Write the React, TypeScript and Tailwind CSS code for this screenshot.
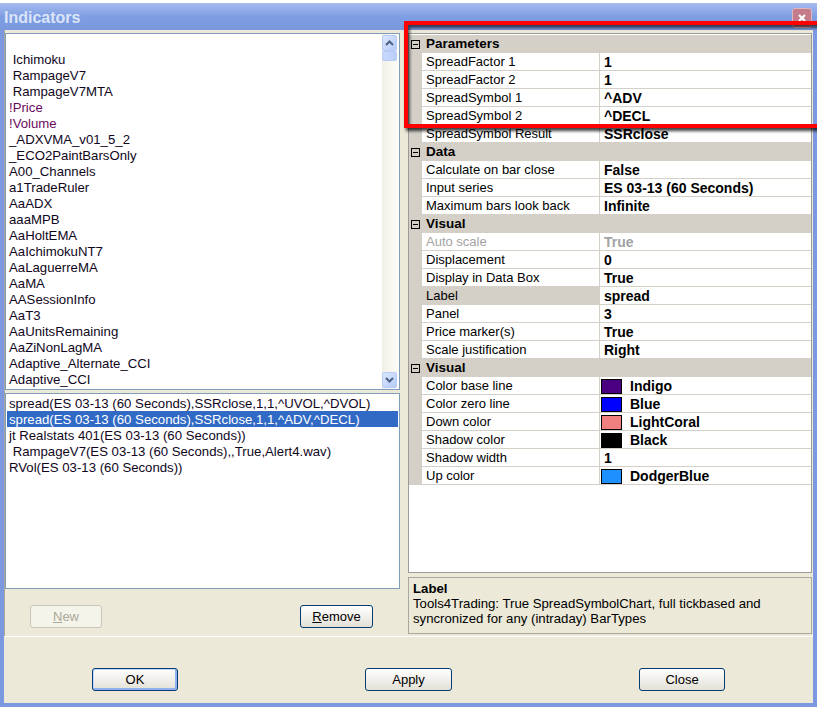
import React from "react";

const indicators: { t: string; c?: string }[] = [
  { t: " " },
  { t: " Ichimoku" },
  { t: " RampageV7" },
  { t: " RampageV7MTA" },
  { t: "!Price", c: "text-[#6a0a5e]" },
  { t: "!Volume", c: "text-[#6a0a5e]" },
  { t: "_ADXVMA_v01_5_2" },
  { t: "_ECO2PaintBarsOnly" },
  { t: "A00_Channels" },
  { t: "a1TradeRuler" },
  { t: "AaADX" },
  { t: "aaaMPB" },
  { t: "AaHoltEMA" },
  { t: "AaIchimokuNT7" },
  { t: "AaLaguerreMA" },
  { t: "AaMA" },
  { t: "AASessionInfo" },
  { t: "AaT3" },
  { t: "AaUnitsRemaining" },
  { t: "AaZiNonLagMA" },
  { t: "Adaptive_Alternate_CCI" },
  { t: "Adaptive_CCI" },
];

const configured = [
  "spread(ES 03-13 (60 Seconds),SSRclose,1,1,^UVOL,^DVOL)",
  "spread(ES 03-13 (60 Seconds),SSRclose,1,1,^ADV,^DECL)",
  "jt Realstats 401(ES 03-13 (60 Seconds))",
  " RampageV7(ES 03-13 (60 Seconds),,True,Alert4.wav)",
  "RVol(ES 03-13 (60 Seconds))",
];

type Row =
  | { kind: "cat"; name: string }
  | { kind: "item"; name: string; value: string; swatch?: string; disabled?: boolean; selected?: boolean };

const rows: Row[] = [
  { kind: "cat", name: "Parameters" },
  { kind: "item", name: "SpreadFactor 1", value: "1" },
  { kind: "item", name: "SpreadFactor 2", value: "1" },
  { kind: "item", name: "SpreadSymbol 1", value: "^ADV" },
  { kind: "item", name: "SpreadSymbol 2", value: "^DECL" },
  { kind: "item", name: "SpreadSymbol Result", value: "SSRclose" },
  { kind: "cat", name: "Data" },
  { kind: "item", name: "Calculate on bar close", value: "False" },
  { kind: "item", name: "Input series", value: "ES 03-13 (60 Seconds)" },
  { kind: "item", name: "Maximum bars look back", value: "Infinite" },
  { kind: "cat", name: "Visual" },
  { kind: "item", name: "Auto scale", value: "True", disabled: true },
  { kind: "item", name: "Displacement", value: "0" },
  { kind: "item", name: "Display in Data Box", value: "True" },
  { kind: "item", name: "Label", value: "spread", selected: true },
  { kind: "item", name: "Panel", value: "3" },
  { kind: "item", name: "Price marker(s)", value: "True" },
  { kind: "item", name: "Scale justification", value: "Right" },
  { kind: "cat", name: "Visual" },
  { kind: "item", name: "Color base line", value: "Indigo", swatch: "bg-[#4b0082]" },
  { kind: "item", name: "Color zero line", value: "Blue", swatch: "bg-[#0000ff]" },
  { kind: "item", name: "Down color", value: "LightCoral", swatch: "bg-[#f08080]" },
  { kind: "item", name: "Shadow color", value: "Black", swatch: "bg-[#000000]" },
  { kind: "item", name: "Shadow width", value: "1" },
  { kind: "item", name: "Up color", value: "DodgerBlue", swatch: "bg-[#1e90ff]" },
];

function Minus() {
  return (
    <div className="flex h-[9px] w-[9px] items-center justify-center border border-[#000000] bg-[#d4d0c8]">
      <div className="h-[1px] w-[5px] bg-black" />
    </div>
  );
}

function Arrow({ up }: { up?: boolean }) {
  return (
    <svg width="9" height="6" viewBox="0 0 9 6">
      <path
        d={up ? "M1 5 L4.5 1.5 L8 5" : "M1 1 L4.5 4.5 L8 1"}
        fill="none"
        stroke="#4d6185"
        strokeWidth="2"
      />
    </svg>
  );
}

function ScrollBtn({ up }: { up?: boolean }) {
  return (
    <div className="flex h-[16px] w-[15px] items-center justify-center rounded-[2px] border border-[#b7cbf7] bg-gradient-to-br from-[#dce7fd] to-[#b6cbf8]">
      <Arrow up={up} />
    </div>
  );
}

export default function App() {
  return (
    <div className="relative h-[707px] w-[817px] overflow-hidden bg-white font-['Liberation_Sans',Arial,sans-serif] text-[13px] text-black">
      <div className="h-[3px] bg-white" />
      <div className="flex h-[704px] flex-col bg-[#7c98e0] px-[4px] pb-[4px]">
        {/* title bar */}
        <div className="-mx-[4px] flex h-[27px] items-center justify-between bg-gradient-to-b from-[#a6bcef] via-[#7f9de2] to-[#7a98de] pl-[4px] pr-[5px]">
          <span className="pt-[3px] text-[16px] font-bold leading-none text-[#dbe5f8]">Indicators</span>
          <div className="mt-[2px] flex h-[20px] w-[20px] items-center justify-center rounded-[3px] border border-[#e2b8c0] bg-[#c47c8a]">
            <svg width="10" height="10" viewBox="0 0 10 10">
              <path d="M2 2 L8 8 M8 2 L2 8" stroke="white" strokeWidth="2.2" />
            </svg>
          </div>
        </div>

        {/* body */}
        <div className="flex flex-1 flex-col bg-[#ece9d8]">
          {/* main split area */}
          <div className="flex h-[607px] border-b border-white">
            {/* left panel */}
            <div className="flex w-[400px] flex-col border-l border-[#aca899] pt-[3px] text-[13.2px]">
              <div className="flex h-[357px] w-[395px] border border-[#7f9db9] bg-white">
                <div className="flex-1 pt-[2px] pl-[3px]">
                  {indicators.map((it, i) => (
                    <div key={i} className={`h-[16px] whitespace-pre leading-[16px] ${it.c ?? "text-[#10061c]"}`}>
                      {it.t}
                    </div>
                  ))}
                </div>
                <div className="flex w-[17px] flex-col items-start bg-gradient-to-r from-[#f1efe6] to-[#fdfdfa] pt-[1px]">
                  <ScrollBtn up />
                  <div className="h-[10px] w-[15px] rounded-[2px] border border-[#b7cbf7] bg-gradient-to-r from-[#cbdafd] to-[#b9cdf9]" />
                  <div className="flex-1" />
                  <div className="mb-[1px]">
                    <ScrollBtn />
                  </div>
                </div>
              </div>
              <div className="mt-[3px] h-[196px] w-[395px] border border-[#7f9db9] bg-white pt-[1px]">
                {configured.map((c, i) => (
                  <div
                    key={i}
                    className={`mx-[1px] h-[16px] whitespace-pre pl-[2px] leading-[17px] ${
                      i === 1 ? "bg-[#316ac5] text-white" : "text-[#10061c]"
                    }`}
                  >
                    {c}
                  </div>
                ))}
              </div>
              <div className="mt-[16px] flex text-[13px]">
                <div className="ml-[25px] flex h-[23px] w-[72px] items-center justify-center rounded-[3px] border border-[#c9c7ba] bg-[#f5f4ea] text-[#aca899]">
                  <span>
                    <span className="underline">N</span>ew
                  </span>
                </div>
                <div className="ml-[198px] flex h-[23px] w-[73px] items-center justify-center rounded-[3px] border border-[#003c74] bg-gradient-to-b from-white to-[#e3e0d6]">
                  <span>
                    <span className="underline">R</span>emove
                  </span>
                </div>
              </div>
            </div>

            {/* right panel */}
            <div className="flex flex-1 flex-col pl-[4px] pt-[3px]">
              <div className="h-[540px] w-[404px] border border-[#9a9a9a] bg-white pt-[1px]">
                {rows.map((r, i) =>
                  r.kind === "cat" ? (
                    <div key={i} className="flex h-[18px] items-center bg-[#d4d0c8] pt-[1px]">
                      <div className="ml-[2px] w-[15px]">
                        <Minus />
                      </div>
                      <span className="text-[13.5px] font-bold">{r.name}</span>
                    </div>
                  ) : (
                    <div key={i} className="flex h-[18px]">
                      <div className="w-[13px] bg-[#d4d0c8]" />
                      <div
                        className={`flex w-[178px] items-center border-r border-b border-[#d4d0c8] pl-[4px] pt-[1px] ${
                          r.selected ? "bg-[#d4d0c8]" : ""
                        } ${r.disabled ? "text-[#a3a3a3]" : ""}`}
                      >
                        {r.name}
                      </div>
                      <div
                        className={`flex flex-1 items-center border-b border-[#d4d0c8] pt-[1px] text-[14px] font-bold ${
                          r.swatch ? "pl-[1px]" : "pl-[4px]"
                        } ${r.disabled ? "text-[#a3a3a3]" : ""}`}
                      >
                        {r.swatch && (
                          <div className={`mr-[8px] h-[15px] w-[21px] border border-black ${r.swatch}`} />
                        )}
                        {r.value}
                      </div>
                    </div>
                  )
                )}
              </div>
              <div className="mt-[4px] h-[57px] w-[404px] border border-[#a8a8a0] px-[4px] pt-[3px] text-[13.2px] leading-[15px]">
                <div className="font-bold">Label</div>
                <div>Tools4Trading: True SpreadSymbolChart, full tickbased and</div>
                <div>syncronized for any (intraday) BarTypes</div>
              </div>
            </div>
          </div>

          {/* bottom buttons */}
          <div className="flex pt-[31px]">
            <div className="ml-[88px] flex h-[23px] w-[86px] items-center justify-center rounded-[3px] border border-[#003c74] bg-gradient-to-b from-white to-[#e3e0d6] shadow-[inset_-1px_-1px_0_1px_#8fb1f0,inset_1px_1px_0_0_#c6d8fb]">
              OK
            </div>
            <div className="ml-[187px] flex h-[23px] w-[87px] items-center justify-center rounded-[3px] border border-[#003c74] bg-gradient-to-b from-white to-[#e3e0d6]">
              Apply
            </div>
            <div className="ml-[187px] flex h-[23px] w-[86px] items-center justify-center rounded-[3px] border border-[#003c74] bg-gradient-to-b from-white to-[#e3e0d6]">
              Close
            </div>
          </div>
        </div>
      </div>

      {/* red highlight overlay */}
      <div className="absolute left-[404px] top-[21px] h-[107px] w-[440px] border-[4px] border-[#ff0000] shadow-[2px_3px_3px_rgba(0,0,0,0.75),inset_2px_3px_3px_rgba(0,0,0,0.6)]" />
    </div>
  );
}
